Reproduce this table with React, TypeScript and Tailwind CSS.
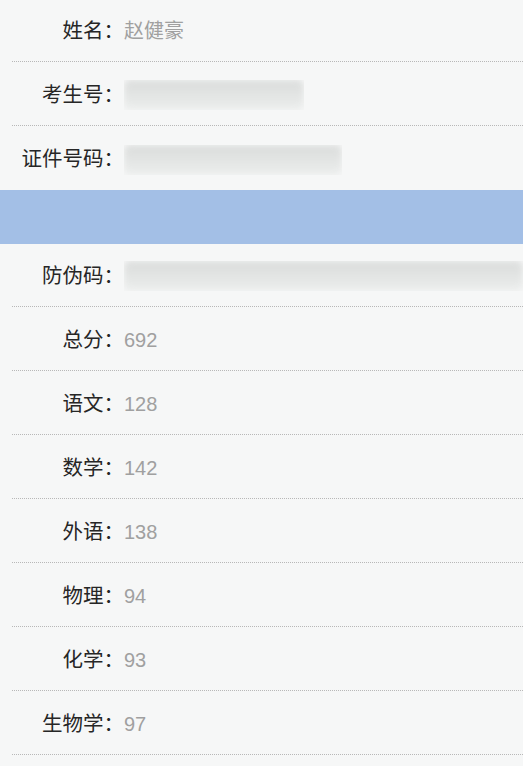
import React from 'react';

interface Row {
  label: string;
  value?: string;
  blur?: number;
}

const topRows: Row[] = [
  { label: '姓名', value: '赵健豪' },
  { label: '考生号', blur: 180 },
  { label: '证件号码', blur: 218 },
];

const scoreRows: Row[] = [
  { label: '防伪码', blur: 410 },
  { label: '总分', value: '692' },
  { label: '语文', value: '128' },
  { label: '数学', value: '142' },
  { label: '外语', value: '138' },
  { label: '物理', value: '94' },
  { label: '化学', value: '93' },
  { label: '生物学', value: '97' },
];

function InfoRow({ row, noLine }: { row: Row; noLine?: boolean }) {
  return (
    <div className={'flex items-center ml-3 h-[64px] pt-[3px] ' + (noLine ? '' : 'border-b border-dotted border-[#b8b8b8]')}>
      <span className="w-[112px] shrink-0 text-right text-[20.5px] text-[#262626]">{row.label}：</span>
      {row.value && <span className="text-[20px] text-[#a0a0a0]">{row.value}</span>}
      {row.blur && (
        <div className="h-[30px] overflow-hidden" style={{ width: row.blur }}>
          <div className="h-full w-full rounded-md bg-gradient-to-b from-[#dadcdb] to-[#eceeed] blur-[3px]" />
        </div>
      )}
    </div>
  );
}

export default function App() {
  return (
    <div className="w-[523px] h-[766px] overflow-hidden bg-[#f6f7f7]" style={{ fontFamily: '"Liberation Sans", "Noto Sans CJK SC", sans-serif' }}>
      <div className="-mt-[2px]">
        {topRows.map((r, i) => (
          <InfoRow key={r.label} row={r} noLine={i === topRows.length - 1} />
        ))}
      </div>
      <div className="h-[54px] bg-[#a3bfe6]" />
      <div className="-mt-[1px]">
        {scoreRows.map(r => (
          <InfoRow key={r.label} row={r} />
        ))}
      </div>
    </div>
  );
}
